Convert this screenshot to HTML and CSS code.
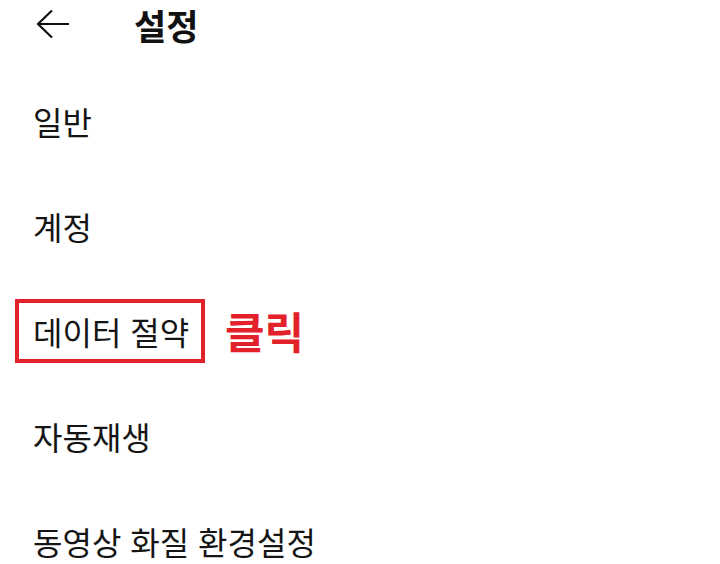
FILE: index.html
```html
<!DOCTYPE html>
<html lang="ko">
<head>
<meta charset="utf-8">
<link rel="stylesheet" href="styles.css">
</head>
<body>
<div class="screen">
  <header class="header">
    <svg class="back" width="34" height="30" viewBox="0 0 34 30">
      <path d="M33 15H2M16 1.5L2 15l14 13.5" fill="none" stroke="#111" stroke-width="2.2"/>
    </svg>
    <h1 class="title">설정</h1>
  </header>
  <ul class="list">
    <li class="item">일반</li>
    <li class="item">계정</li>
    <li class="item item-marked">
      <span class="box">데이터 절약</span>
      <span class="note">클릭</span>
    </li>
    <li class="item">자동재생</li>
    <li class="item">동영상 화질 환경설정</li>
  </ul>
</div>
</body>
</html>
```
FILE: styles.css
```css
html, body {
  margin: 0;
  padding: 0;
  background: #ffffff;
}
.screen {
  width: 720px;
  height: 564px;
  overflow: hidden;
  font-family: "Noto Sans CJK KR", "Noto Sans", sans-serif;
  color: #151515;
}
.header {
  height: 50px;
  display: flex;
  align-items: center;
  padding-left: 36px;
}
.back {
  display: block;
  margin-top: -2px;
}
.title {
  margin: 0 0 0 64px;
  font-size: 35px;
  font-weight: 700;
  line-height: 50px;
  color: #111;
}
.list {
  list-style: none;
  margin: 18px 0 0 0;
  padding: 0;
}
.item {
  height: 105px;
  display: flex;
  align-items: center;
  padding-left: 33px;
  font-size: 32px;
  line-height: 1;
}
.item-marked {
  padding-left: 15px;
}
.box {
  box-sizing: border-box;
  width: 190px;
  height: 64px;
  border: 4px solid #e3212b;
  display: flex;
  align-items: center;
  padding-left: 14px;
  white-space: nowrap;
}
.note {
  margin-left: 20px;
  font-size: 43px;
  font-weight: 700;
  color: #e3212b;
}
```
